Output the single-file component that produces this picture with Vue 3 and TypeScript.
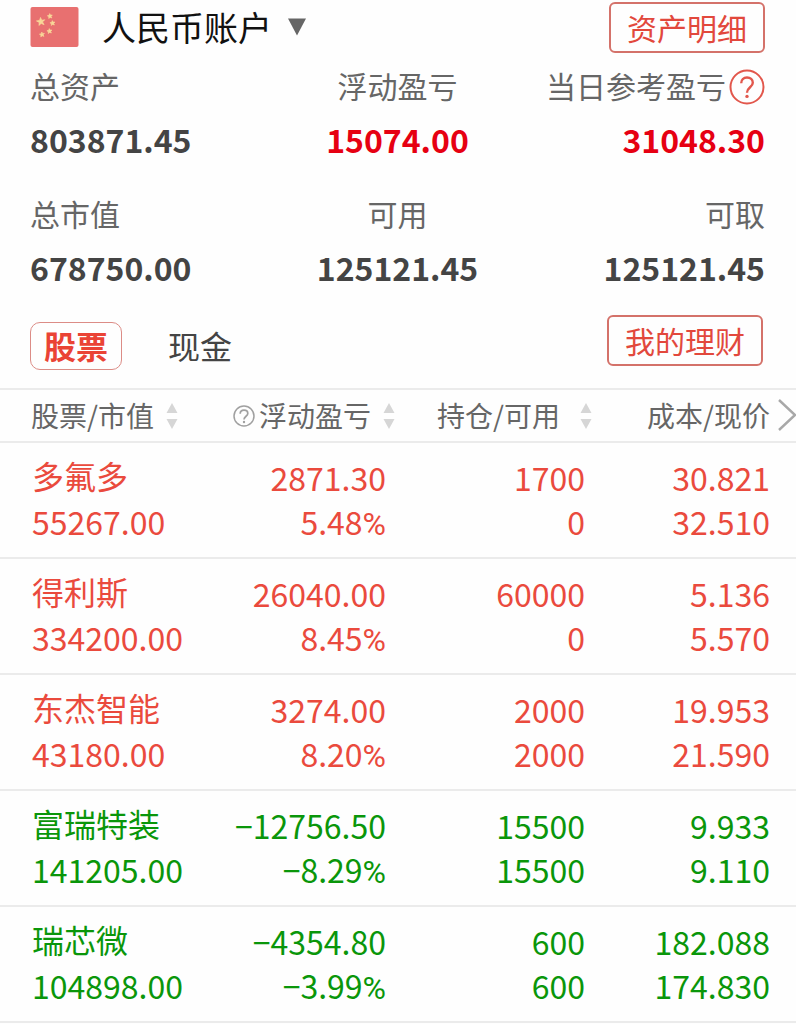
<script setup lang="ts">
import { ref } from 'vue'

interface Figure {
  label: string
  value: string
  gain?: boolean
  help?: boolean
}

interface Holding {
  name: string
  marketValue: string
  profit: string
  profitRate: string
  position: string
  available: string
  cost: string
  price: string
  trend: 'up' | 'down'
}

interface Column {
  key: string
  label: string
  help?: boolean
  sortable: boolean
}

const account = ref('cny')
const activeTab = ref('stock')

const figures: Figure[] = [
  { label: '总资产', value: '803871.45' },
  { label: '浮动盈亏', value: '15074.00', gain: true },
  { label: '当日参考盈亏', value: '31048.30', gain: true, help: true },
  { label: '总市值', value: '678750.00' },
  { label: '可用', value: '125121.45' },
  { label: '可取', value: '125121.45' },
]

const columns: Column[] = [
  { key: 'market', label: '股票/市值', sortable: true },
  { key: 'profit', label: '浮动盈亏', help: true, sortable: true },
  { key: 'position', label: '持仓/可用', sortable: true },
  { key: 'cost', label: '成本/现价', sortable: false },
]

const holdings: Holding[] = [
  { name: '多氟多', marketValue: '55267.00', profit: '2871.30', profitRate: '5.48', position: '1700', available: '0', cost: '30.821', price: '32.510', trend: 'up' },
  { name: '得利斯', marketValue: '334200.00', profit: '26040.00', profitRate: '8.45', position: '60000', available: '0', cost: '5.136', price: '5.570', trend: 'up' },
  { name: '东杰智能', marketValue: '43180.00', profit: '3274.00', profitRate: '8.20', position: '2000', available: '2000', cost: '19.953', price: '21.590', trend: 'up' },
  { name: '富瑞特装', marketValue: '141205.00', profit: '−12756.50', profitRate: '−8.29', position: '15500', available: '15500', cost: '9.933', price: '9.110', trend: 'down' },
  { name: '瑞芯微', marketValue: '104898.00', profit: '−4354.80', profitRate: '−3.99', position: '600', available: '600', cost: '182.088', price: '174.830', trend: 'down' },
]
</script>

<template>
  <main class="page">
    <header class="topbar">
      <svg class="flag" viewBox="0 0 48 40" aria-hidden="true">
        <rect width="48" height="40" rx="2" fill="#e87070" />
        <g fill="#f8d898" stroke="#f8d898" stroke-width="0.6">
          <path d="M10 10.4l1.3 2.8 3-.5-2.2 2.2 1.5 2.8-2.9-1.2-2.3 2 .3-3.1-2.8-1.5 3.2-.7z" />
          <path d="M19.2 6.6l.8 1.5 1.8-.1-1.2 1.4.7 1.6-1.7-.6-1.4 1.1.1-1.8-1.5-.9 1.8-.5z" />
          <path d="M21.8 13.6l.8 1.5 1.8-.1-1.2 1.4.7 1.6-1.7-.6-1.4 1.1.1-1.8-1.5-.9 1.8-.5z" />
          <path d="M18.8 21.6l.8 1.5 1.8-.1-1.2 1.4.7 1.6-1.7-.6-1.4 1.1.1-1.8-1.5-.9 1.8-.5z" />
          <path d="M11.3 25l.8 1.5 1.8-.1-1.2 1.4.7 1.6-1.7-.6-1.4 1.1.1-1.8-1.5-.9 1.8-.5z" />
        </g>
      </svg>
      <label class="account">
        <select v-model="account" class="account-select" aria-label="账户">
          <option value="cny">人民币账户</option>
        </select>
        <svg class="caret" viewBox="0 0 18 18" aria-hidden="true">
          <path d="M0 0.5h18l-9 17z" fill="#666" />
        </svg>
      </label>
      <button type="button" class="outlined">资产明细</button>
    </header>

    <dl class="figures">
      <div v-for="f in figures" :key="f.label" class="figure">
        <dt class="figure-label">
          <span class="figure-name">{{ f.label }}</span>
          <button v-if="f.help" type="button" class="help" aria-label="说明">
            <svg class="help-icon" viewBox="0 0 36 36" fill="none" stroke="#e2574c" stroke-width="2" aria-hidden="true">
              <circle cx="18" cy="18" r="16.5" />
              <path d="M12.2 14.3c0-3.6 2.4-5.8 5.8-5.8s5.8 2.1 5.8 5.2c0 4.6-5.8 4.6-5.8 10" stroke-width="2.4" />
              <circle cx="18" cy="27.4" r="1.7" fill="#e2574c" stroke="none" />
            </svg>
          </button>
        </dt>
        <dd class="figure-value" :class="{ gain: f.gain }">{{ f.value }}</dd>
      </div>
    </dl>

    <nav class="tabs">
      <button type="button" class="tab" :class="{ active: activeTab === 'stock' }" @click="activeTab = 'stock'">股票</button>
      <button type="button" class="tab" :class="{ active: activeTab === 'cash' }" @click="activeTab = 'cash'">现金</button>
      <button type="button" class="outlined">我的理财</button>
    </nav>

    <div class="holdings">
      <table class="table">
        <thead>
          <tr>
            <th v-for="c in columns" :key="c.key" scope="col" :class="c.key">
              <button type="button" class="sort">
                <svg v-if="c.help" class="hint" viewBox="0 0 22 22" fill="none" stroke="#a0a0a0" stroke-width="1.5" aria-hidden="true">
                  <circle cx="11" cy="11" r="10" />
                  <path d="M7.2 8.8c0-2.3 1.6-3.7 3.8-3.7s3.8 1.3 3.8 3.3c0 2.8-3.8 3-3.8 6.2" stroke-width="1.7" />
                  <circle cx="11" cy="17" r="1.2" fill="#a0a0a0" stroke="none" />
                </svg>
                <span class="sort-label">{{ c.label }}</span>
                <svg v-if="c.sortable" class="arrows" viewBox="0 0 12 28" fill="#d6d6d6" aria-hidden="true">
                  <path d="M6 1l5.5 10H.5zM6 27l5.5-10H.5z" />
                </svg>
              </button>
            </th>
          </tr>
        </thead>
        <tbody>
          <tr v-for="h in holdings" :key="h.name" :class="h.trend">
            <td class="market"><div class="name">{{ h.name }}</div><div>{{ h.marketValue }}</div></td>
            <td class="profit"><div>{{ h.profit }}</div><div>{{ h.profitRate }}<span class="unit">%</span></div></td>
            <td class="position"><div>{{ h.position }}</div><div>{{ h.available }}</div></td>
            <td class="cost"><div>{{ h.cost }}</div><div>{{ h.price }}</div></td>
          </tr>
        </tbody>
      </table>
      <button type="button" class="more" aria-label="更多列">
        <svg class="more-icon" viewBox="0 0 20 34" fill="none" stroke="#a8a8a8" stroke-width="2.4" aria-hidden="true">
          <path d="M2 2l16 15L2 32" />
        </svg>
      </button>
    </div>
  </main>
</template>

<style>
body {
  margin: 0;
  background: #fefefe;
}
</style>

<style scoped>
.page {
  font-family: "Noto Sans CJK SC", "Noto Sans", sans-serif;
  color: #444;
  overflow: hidden;
}

button,
select {
  font: inherit;
  color: inherit;
  background: none;
  border: 0;
  padding: 0;
  margin: 0;
  cursor: pointer;
}

.topbar {
  display: flex;
  align-items: center;
  padding: 2px 31px 0 30px;
}

.flag {
  width: 49px;
  height: 40px;
  margin-bottom: 2px;
}

.account {
  display: flex;
  align-items: center;
  gap: 16px;
  margin-left: 23px;
  margin-bottom: 2px;
}

.account-select {
  appearance: none;
  font-size: 34px;
  line-height: 48px;
  color: #111;
}

.caret {
  width: 18px;
  height: 18px;
}

.outlined {
  box-sizing: border-box;
  height: 51px;
  margin-left: auto;
  padding: 0 16px 2px;
  border: 2px solid #d4726a;
  border-radius: 6px;
  font-size: 30px;
  line-height: 44px;
  color: #e2483c;
}

.figures {
  display: grid;
  grid-template-columns: 1fr 1fr 1fr;
  row-gap: 32px;
  margin: 0;
  padding: 12px 31px 0 30px;
}

.figure {
  display: flex;
  flex-direction: column;
  align-items: center;
  gap: 12px;
}

.figure:nth-child(3n + 1) {
  align-items: flex-start;
}

.figure:nth-child(3n) {
  align-items: flex-end;
}

.figure-label {
  display: flex;
  align-items: center;
  gap: 3px;
  font-size: 30px;
  line-height: 40px;
  color: #666;
  white-space: nowrap;
}

.help {
  margin-top: 4px;
}

.help-icon {
  display: block;
  width: 36px;
  height: 36px;
}

.figure-value {
  margin: 0;
  font-size: 32px;
  font-weight: 700;
  line-height: 44px;
}

.gain {
  color: #e60012;
}

.tabs {
  display: flex;
  align-items: flex-start;
  padding: 26px 33px 18px 30px;
}

.tab {
  box-sizing: border-box;
  height: 48px;
  margin-top: 7px;
  padding: 0 13px 2px;
  border: 1px solid transparent;
  border-radius: 10px;
  font-size: 32px;
  line-height: 44px;
}

.tab + .tab {
  margin-left: 32px;
}

.tab.active {
  border-color: #dc8c86;
  font-weight: 700;
  color: #ea4335;
}

.holdings {
  position: relative;
  border-top: 2px solid #ebebeb;
}

.table {
  width: 100%;
  table-layout: fixed;
  border-collapse: separate;
  border-spacing: 0;
}

th,
td {
  padding: 0;
  border-bottom: 2px solid #ebebeb;
  text-align: right;
  white-space: nowrap;
}

th {
  height: 51px;
  font-weight: 400;
}

.sort {
  display: inline-flex;
  align-items: center;
  gap: 12px;
  font-size: 28px;
  line-height: 40px;
  color: #666;
  vertical-align: middle;
}

.sort-label {
  padding-bottom: 2px;
}

.hint {
  width: 22px;
  height: 22px;
  margin-right: -8px;
}

.arrows {
  width: 12px;
  height: 28px;
}

td {
  padding-top: 12px;
  padding-bottom: 14px;
  font-size: 32px;
  line-height: 44px;
  vertical-align: top;
}

th.market {
  padding-left: 31px;
  text-align: left;
}

td.market {
  padding-top: 10px;
  padding-left: 32px;
  text-align: left;
}

.name {
  margin-bottom: 2px;
}

th.profit {
  padding-right: 3px;
}

th.position {
  padding-right: 5px;
}

.position .sort {
  gap: 20px;
}

td.profit,
td.position {
  padding-right: 12px;
}

.cost {
  padding-right: 26px;
}

.unit {
  font-family: Roboto, sans-serif;
  line-height: 1;
}

.up {
  color: #ea4a3d;
}

.down {
  color: #0a960a;
}

.more {
  position: absolute;
  top: 8px;
  right: -1px;
}

.more-icon {
  display: block;
  width: 20px;
  height: 34px;
}
</style>
